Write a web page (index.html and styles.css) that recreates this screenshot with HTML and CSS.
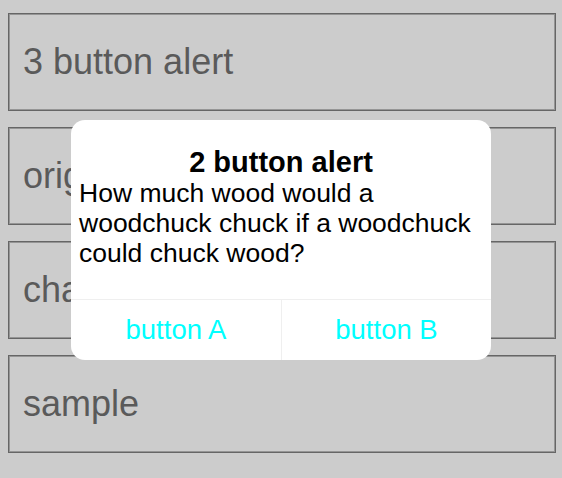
FILE: index.html
```html
<!DOCTYPE html>
<html>
<head>
<meta charset="utf-8">
<link rel="stylesheet" href="styles.css">
</head>
<body>
<div class="list">
  <div class="item">3 button alert</div>
  <div class="item">original</div>
  <div class="item">change</div>
  <div class="item">sample</div>
</div>
<div class="alert">
  <div class="alert-body">
    <div class="alert-title">2 button alert</div>
    <div class="alert-msg">How much wood would a woodchuck chuck if a woodchuck could chuck wood?</div>
  </div>
  <div class="alert-buttons">
    <div class="alert-btn">button A</div>
    <div class="alert-btn">button B</div>
  </div>
</div>
</body>
</html>
```
FILE: styles.css
```css
html, body {
  margin: 0;
  padding: 0;
  background: #cccccc;
  font-family: "Liberation Sans", Arial, sans-serif;
}
body {
  width: 562px;
  height: 478px;
  position: relative;
  overflow: hidden;
}
.list {
  display: flex;
  flex-direction: column;
  gap: 16px;
  padding: 13px 6px 0 8px;
}
.item {
  height: 98px;
  box-sizing: border-box;
  border: 1px solid #666666;
  box-shadow: inset 0 0 0 1px #959595;
  display: flex;
  align-items: center;
  padding-left: 14px;
  font-size: 36px;
  color: #5a5a5a;
  white-space: nowrap;
  overflow: hidden;
}
.alert {
  position: absolute;
  left: 71px;
  top: 120px;
  width: 420px;
  height: 240px;
  background: #ffffff;
  border-radius: 14px;
  display: flex;
  flex-direction: column;
  overflow: hidden;
}
.alert-body {
  flex: 1;
  padding: 27px 8px 0 8px;
}
.alert-title {
  font-size: 29px;
  font-weight: bold;
  line-height: 31px;
  text-align: center;
  color: #000;
}
.alert-msg {
  font-size: 26.5px;
  line-height: 30px;
  color: #000;
}
.alert-buttons {
  height: 60px;
  border-top: 1px solid #efefef;
  display: grid;
  grid-template-columns: 210px 1fr;
}
.alert-btn {
  display: flex;
  align-items: center;
  justify-content: center;
  color: #00ffff;
  font-size: 27.5px;
}
.alert-btn + .alert-btn {
  border-left: 1px solid #efefef;
}
```
